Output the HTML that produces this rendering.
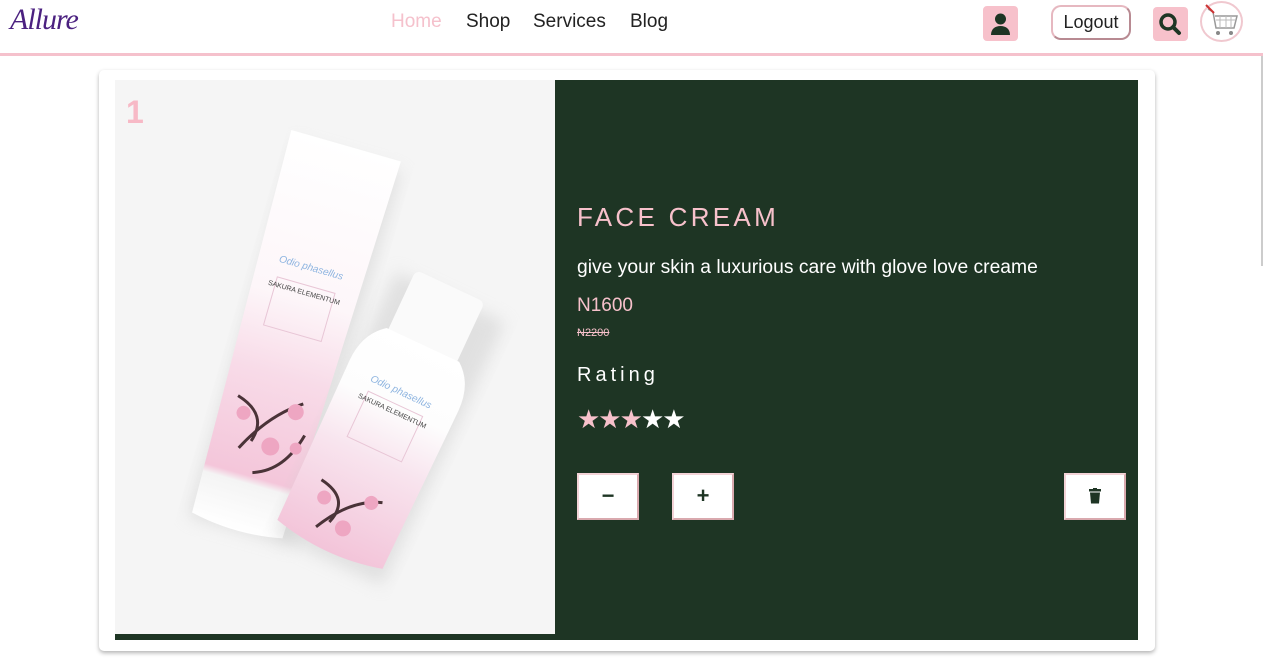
<!DOCTYPE html>
<html><head><meta charset="utf-8"><style>
*{margin:0;padding:0;box-sizing:border-box}
body{width:1263px;height:672px;background:#fff;font-family:"Liberation Sans",sans-serif;position:relative;overflow:hidden}
.hdr{position:absolute;left:0;top:0;width:1263px;height:56px;border-bottom:3px solid #f5c1cc}
.logo{position:absolute;left:10px;top:3px;font-family:"Liberation Serif",serif;font-style:italic;font-size:30px;color:#4b2180;letter-spacing:-1px}
.nav{position:absolute;top:11px;font-size:19px;color:#222}
.ic{position:absolute;background:#f7c1cb;border-radius:4px}
.card{position:absolute;left:99px;top:70px;width:1056px;height:581px;background:#fff;border-radius:5px;box-shadow:0 2px 4px rgba(0,0,0,.3)}
.green{position:absolute;left:115px;top:80px;width:1023px;height:560px;background:#1e3524}
.img{position:absolute;left:115px;top:80px;width:440px;height:554px;background:#f5f5f5;overflow:hidden}
.t{position:absolute;left:577px;color:#fff}
.btn{position:absolute;top:473px;width:62px;height:47px;background:#fff;border:2px solid #d9a9ae;border-top-color:#f3d3d7;border-left-color:#f3d3d7;font-size:22px;font-weight:bold;color:#1e3524;text-align:center;line-height:42px}
</style></head><body>
<div class="hdr">
<div class="logo">Allure</div>
<div class="nav" style="left:391px;color:#f5c1cc">Home</div>
<div class="nav" style="left:466px">Shop</div>
<div class="nav" style="left:533px">Services</div>
<div class="nav" style="left:630px">Blog</div>
<div class="ic" style="left:983px;top:6px;width:35px;height:35px"><svg width="35" height="35" viewBox="0 0 35 35"><circle cx="17.5" cy="13" r="5.5" fill="#1e3524"/><path d="M8 29c0-6 4-9 9.5-9s9.5 3 9.5 9z" fill="#1e3524"/></svg></div>
<div style="position:absolute;left:1051px;top:5px;width:80px;height:35px;border:2px solid #e6b8c0;border-right-color:#b88a92;border-bottom-color:#b88a92;border-radius:10px;font-size:18px;text-align:center;line-height:31px;color:#222">Logout</div>
<div class="ic" style="left:1153px;top:7px;width:35px;height:34px"><svg width="35" height="34" viewBox="0 0 35 34"><circle cx="15" cy="15" r="7" fill="none" stroke="#1e3524" stroke-width="3.5"/><path d="M20 20l6 6" stroke="#1e3524" stroke-width="4" stroke-linecap="round"/></svg></div>
<div style="position:absolute;left:1200px;top:1px;width:43px;height:41px;border:2px solid #f0c8cf;border-radius:50%;background:#fff"><svg width="40" height="38" viewBox="0 0 40 38"><path d="M6 6l5 3 3 16h18l3-12H13" fill="none" stroke="#999" stroke-width="1.5"/><path d="M14 17h19M18 13v12M24 13v12M29 13v12" stroke="#bbb" stroke-width="1"/><circle cx="16" cy="30" r="2" fill="#888"/><circle cx="29" cy="30" r="2" fill="#888"/><path d="M4 2l8 8" stroke="#c33" stroke-width="2"/></svg></div>
</div>
<div style="position:absolute;left:1261px;top:56px;width:2px;height:210px;background:#ccc"></div>
<div class="card"></div>
<div class="green"></div>
<div class="img">
<svg width="440" height="554" viewBox="0 0 440 554">
<defs>
<linearGradient id="g1" x1="0" y1="0" x2="0" y2="1"><stop offset="0" stop-color="#fff"/><stop offset=".4" stop-color="#fdf6f9"/><stop offset=".6" stop-color="#f8dbe8"/><stop offset=".86" stop-color="#f4c6da"/><stop offset=".88" stop-color="#f4f4f4"/><stop offset="1" stop-color="#fff"/></linearGradient>
<linearGradient id="g2" x1="0" y1="0" x2="0" y2="1"><stop offset="0" stop-color="#fff"/><stop offset=".3" stop-color="#fdfdfd"/><stop offset=".55" stop-color="#f8e4ee"/><stop offset="1" stop-color="#f3c4d9"/></linearGradient>
<filter id="sh"><feGaussianBlur stdDeviation="8"/></filter>
</defs>
<g transform="translate(176,258) rotate(16)">
<rect x="-50" y="-190" width="110" height="390" fill="#ccc" opacity=".5" filter="url(#sh)"/>
<path d="M-57 -200 L57 -200 L47 195 Q0 205 -47 195 Z" fill="url(#g1)"/>
<rect x="-30" y="-55" width="60" height="50" fill="none" stroke="#e8c6d6"/>
<text x="0" y="-70" font-size="10" fill="#8db4e0" text-anchor="middle" font-style="italic">Odio phasellus</text>
<text x="0" y="-45" font-size="7" fill="#444" text-anchor="middle">SAKURA ELEMENTUM</text>
<path d="M-20 120 q20 -40 50 -60 M-10 110 q10 -30 -25 -40 M0 140 q30 -10 40 -50" stroke="#4a3338" stroke-width="3" fill="none"/>
<g fill="#eea6c2"><circle cx="25" cy="70" r="8"/><circle cx="-25" cy="85" r="7"/><circle cx="10" cy="110" r="9"/><circle cx="35" cy="105" r="6"/></g>
</g>
<g transform="translate(272,342) rotate(25)">
<rect x="-55" y="-140" width="120" height="290" fill="#ccc" opacity=".5" filter="url(#sh)"/>
<rect x="-38" y="-150" width="76" height="70" rx="6" fill="#fafafa"/>
<path d="M-40 -85 Q-60 -70 -60 -40 L-58 135 Q0 150 58 135 L60 -40 Q60 -70 40 -85 Z" fill="url(#g2)"/>
<rect x="-30" y="-20" width="60" height="50" fill="none" stroke="#e8c6d6"/>
<text x="0" y="-30" font-size="10" fill="#8db4e0" text-anchor="middle" font-style="italic">Odio phasellus</text>
<text x="0" y="-10" font-size="7" fill="#444" text-anchor="middle">SAKURA ELEMENTUM</text>
<path d="M-20 125 q20 -40 50 -50 M-10 115 q10 -30 -25 -35" stroke="#4a3338" stroke-width="3" fill="none"/>
<g fill="#eea6c2"><circle cx="20" cy="80" r="7"/><circle cx="-25" cy="95" r="7"/><circle cx="5" cy="115" r="8"/></g>
</g>
</svg>
<div style="position:absolute;left:11px;top:14px;font-size:32px;font-weight:bold;color:#f7b9c6">1</div>
</div>
<div class="t" style="top:202px;font-size:26px;letter-spacing:3.3px;color:#f7c1cb">FACE CREAM</div>
<div class="t" style="top:257px;font-size:19.3px">give your skin a luxurious care with glove love creame</div>
<div class="t" style="top:295px;font-size:19px;color:#f7c1cb">N1600</div>
<div class="t" style="top:327px;font-size:11px;color:#f7c1cb;text-decoration:line-through">N2200</div>
<div class="t" style="top:364px;font-size:20px;letter-spacing:4px">Rating</div>
<div class="t" style="top:404px;font-size:26px;letter-spacing:-2px"><span style="color:#f7c1cb">★★★</span>★★</div>
<div class="btn" style="left:577px">−</div>
<div class="btn" style="left:672px">+</div>
<div class="btn" style="left:1064px"><svg width="14" height="16" viewBox="0 0 14 16" style="margin-top:13px"><rect x="1" y="1" width="12" height="2.5" fill="#1e3524"/><rect x="5" y="0" width="4" height="2" fill="#1e3524"/><path d="M2 4.5h10l-1 11H3z" fill="#1e3524"/></svg></div>
</body></html>
